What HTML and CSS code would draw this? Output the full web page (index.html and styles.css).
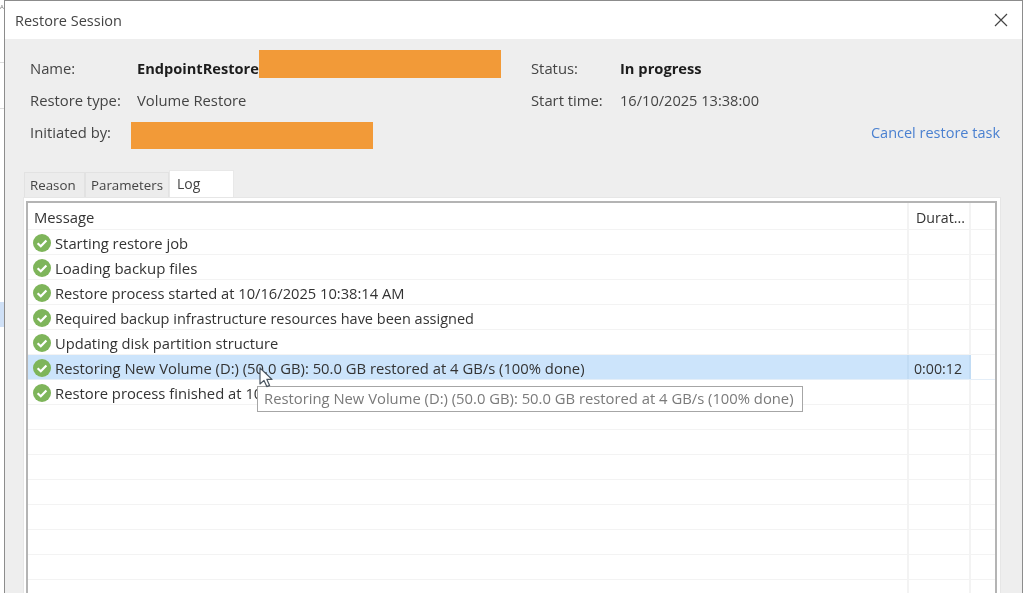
FILE: index.html
```html
<!DOCTYPE html>
<html lang="en">
<head>
<meta charset="utf-8">
<title>Restore Session</title>
<link rel="stylesheet" href="styles.css">
</head>
<body>
<span class="behind-letter">A</span>
<span class="behind-line behind-line-a"></span>
<span class="behind-line behind-line-b"></span>
<span class="behind-select"></span>
<div class="window">
  <header class="titlebar">
    <span class="title">Restore Session</span>
    <svg class="close" width="14" height="14" viewBox="0 0 14 14"><path d="M1 1L13 13M13 1L1 13" stroke="#444" stroke-width="1.2" fill="none"/></svg>
  </header>
  <main class="panel">
    <section class="summary">
      <div class="row">
        <span class="label">Name:</span>
        <span class="col-main"><span class="value strong strong-name">EndpointRestore</span><span class="redact redact-name"></span></span>
        <span class="label label-right">Status:</span>
        <span class="value strong">In progress</span>
      </div>
      <div class="row">
        <span class="label">Restore type:</span>
        <span class="col-main"><span class="value">Volume Restore</span></span>
        <span class="label label-right">Start time:</span>
        <span class="value value-time">16/10/2025 13:38:00</span>
      </div>
      <div class="row">
        <span class="label label-short">Initiated by:</span>
        <span class="redact redact-init"></span>
        <a class="cancel">Cancel restore task</a>
      </div>
    </section>
    <nav class="tabs">
      <span class="tab tab-reason">Reason</span>
      <span class="tab tab-params">Parameters</span>
      <span class="tab tab-log">Log</span>
    </nav>
    <section class="tabbody">
      <div class="list">
        <div class="lrow head"><span class="msg head-msg">Message</span><span class="dur head-dur">Durat...</span><span class="pad"></span></div>
        <div class="lrow"><span class="msg"><svg class="ok" viewBox="0 0 18 18"><circle cx="9" cy="9" r="9"/><path d="M4.6 9.2L7.8 12.2L13.4 6.4"/></svg>Starting restore job</span><span class="dur"></span><span class="pad"></span></div>
        <div class="lrow"><span class="msg msg-wide"><svg class="ok" viewBox="0 0 18 18"><circle cx="9" cy="9" r="9"/><path d="M4.6 9.2L7.8 12.2L13.4 6.4"/></svg>Loading backup files</span><span class="dur"></span><span class="pad"></span></div>
        <div class="lrow"><span class="msg msg-snug"><svg class="ok" viewBox="0 0 18 18"><circle cx="9" cy="9" r="9"/><path d="M4.6 9.2L7.8 12.2L13.4 6.4"/></svg>Restore process started at 10/16/2025 10:38:14 AM</span><span class="dur"></span><span class="pad"></span></div>
        <div class="lrow"><span class="msg msg-tight"><svg class="ok" viewBox="0 0 18 18"><circle cx="9" cy="9" r="9"/><path d="M4.6 9.2L7.8 12.2L13.4 6.4"/></svg>Required backup infrastructure resources have been assigned</span><span class="dur"></span><span class="pad"></span></div>
        <div class="lrow"><span class="msg msg-snug"><svg class="ok" viewBox="0 0 18 18"><circle cx="9" cy="9" r="9"/><path d="M4.6 9.2L7.8 12.2L13.4 6.4"/></svg>Updating disk partition structure</span><span class="dur"></span><span class="pad"></span></div>
        <div class="lrow selected"><span class="msg"><svg class="ok" viewBox="0 0 18 18"><circle cx="9" cy="9" r="9"/><path d="M4.6 9.2L7.8 12.2L13.4 6.4"/></svg>Restoring New Volume (D:) (50.0 GB): 50.0 GB restored at 4 GB/s (100% done)</span><span class="dur">0:00:12</span><span class="pad"></span></div>
        <div class="lrow"><span class="msg"><svg class="ok" viewBox="0 0 18 18"><circle cx="9" cy="9" r="9"/><path d="M4.6 9.2L7.8 12.2L13.4 6.4"/></svg>Restore process finished at 10</span><span class="dur"></span><span class="pad"></span></div>
        <div class="lrow"><span class="msg"></span><span class="dur"></span><span class="pad"></span></div>
        <div class="lrow"><span class="msg"></span><span class="dur"></span><span class="pad"></span></div>
        <div class="lrow"><span class="msg"></span><span class="dur"></span><span class="pad"></span></div>
        <div class="lrow"><span class="msg"></span><span class="dur"></span><span class="pad"></span></div>
        <div class="lrow"><span class="msg"></span><span class="dur"></span><span class="pad"></span></div>
        <div class="lrow"><span class="msg"></span><span class="dur"></span><span class="pad"></span></div>
        <div class="lrow"><span class="msg"></span><span class="dur"></span><span class="pad"></span></div>
        <div class="lrow"><span class="msg"></span><span class="dur"></span><span class="pad"></span></div>
      </div>
    </section>
  </main>
</div>
<div class="tooltip">Restoring New Volume (D:) (50.0 GB): 50.0 GB restored at 4 GB/s (100% done)</div>
<svg class="cursor" width="15" height="21" viewBox="0 0 15 21"><path d="M1 1V17L5 13.4L7.8 19.6L10.6 18.4L7.9 12.4H13Z" fill="#fff" stroke="#4a5560" stroke-width="1.2" stroke-linejoin="round"/></svg>
</body>
</html>
```
FILE: styles.css
```css
* { box-sizing: border-box; }
html, body { margin: 0; height: 593px; overflow: hidden; background: #fff; }
body {
  position: relative;
  font-family: "Open Sans", "Noto Sans", sans-serif;
  font-size: 14.8px;
  color: #333;
  filter: blur(0.4px);
}
.behind-letter { position: absolute; left: 0; top: 3px; font-size: 6px; line-height: 8px; color: #777; }
.behind-line { position: absolute; left: 0; width: 4px; height: 1px; background: #dcdcdc; }
.behind-line-a { top: 62px; }
.behind-line-b { top: 108px; }
.behind-select { position: absolute; left: 0; top: 302px; width: 4px; height: 25px; background: #cfe0f6; }
.window {
  position: relative;
  margin-left: 4px;
  width: 1019px;
  height: 593px;
  border: 1px solid #8c8c8c;
  border-bottom: 0;
  display: flex;
  flex-direction: column;
  background: #eeeeee;
}
.titlebar {
  height: 38px;
  flex: none;
  background: #fff;
  display: flex;
  align-items: center;
  justify-content: space-between;
  padding: 0 14px 0 10px;
}
.title { font-size: 14.5px; color: #444; }
.panel { flex: 1; display: flex; flex-direction: column; padding: 13px 0 0 18px; min-height: 0; }
.summary { display: flex; flex-direction: column; padding-left: 7px; }
.row { height: 32px; display: flex; align-items: center; white-space: nowrap; }
.label { width: 107px; flex: none; color: #444; }
.label-short { width: 101px; }
.label-right { width: 89px; }
.col-main { width: 394px; flex: none; display: flex; align-items: center; }
.value { color: #444; }
.value-time { font-size: 14.6px; }
.strong { font-weight: 700; color: #1c1c1c; font-size: 14.7px; }
.strong-name { font-size: 14.6px; }
.redact { background: #f29a38; flex: none; width: 242px; }
.redact-name { height: 28px; margin-top: -8px; }
.redact-init { height: 27px; margin-top: 6px; }
.cancel { margin-left: auto; margin-right: 22px; color: #4a80d0; font-size: 14.5px; }
.tabs { display: flex; align-items: flex-end; height: 27px; margin-top: 22px; padding-left: 1px; }
.tab { height: 25px; display: flex; align-items: center; padding-left: 5px; background: #ececec; border: 1px solid #e2e2e2; border-bottom: 0; font-size: 13.3px; color: #444; }
.tab-reason { width: 61px; }
.tab-params { width: 84px; }
.tab-log { width: 65px; height: 27px; background: #fff; border-color: #e8e8e8; padding: 0 0 1px 7px; font-size: 14px; }
.tabbody { width: 978px; flex: 1; min-height: 0; background: #fff; padding: 3px 3px 0 2px; border: 1px solid #e6e6e6; border-bottom: 0; }
.list { height: 100%; border: 2px solid #b4b4b4; border-bottom: 0; overflow: hidden; background: #fff; }
.lrow { height: 25px; flex: none; display: flex; border-bottom: 1px solid #f3f3f3; }
.head { height: 27px; }
.msg { width: 881px; flex: none; display: flex; align-items: center; padding: 2px 0 0 5px; white-space: nowrap; border-right: 2px solid #f3f3f3; }
.msg-wide { font-size: 15px; }
.msg-snug { font-size: 14.7px; }
.msg-tight { font-size: 14.5px; }
.dur { width: 62px; flex: none; display: flex; align-items: center; padding: 2px 0 0 5px; border-right: 2px solid #f3f3f3; font-size: 14.2px; }
.head-msg { padding-left: 6px; }
.head-dur { padding-left: 7px; }
.pad { flex: 1; }
.ok { width: 18px; height: 18px; flex: none; margin-right: 4px; }
.ok circle { fill: #7eb55a; }
.ok path { fill: none; stroke: #fff; stroke-width: 2.2; }
.selected { border-bottom-color: #e4eef8; }
.selected .msg, .selected .dur { background: #cce4fb; border-right-color: #c2dcf4; }
.tooltip {
  position: absolute;
  left: 257px;
  top: 386px;
  width: 546px;
  height: 26px;
  background: #fff;
  border: 1px solid #a6a6a6;
  color: #7a7a7a;
  padding-left: 6px;
  line-height: 23px;
  white-space: nowrap;
}
.cursor { position: absolute; left: 259px; top: 367px; }
```
